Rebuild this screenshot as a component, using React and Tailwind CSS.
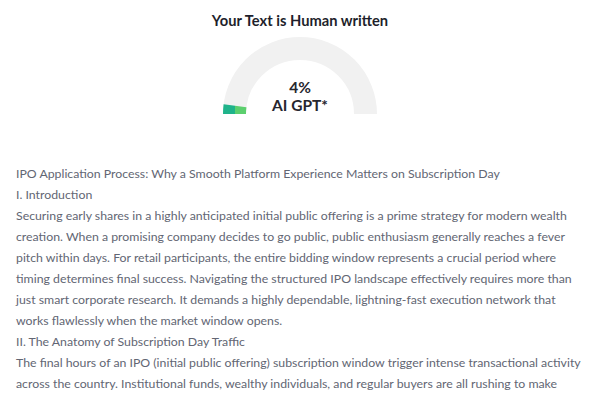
import React from "react";

function Gauge() {
  const cx = 88, cy = 80, R = 77, r = 54;
  const mid = (R + r) / 2;
  const sw = R - r;
  const a = Math.PI * (1 - 0.04);
  const ex = cx + mid * Math.cos(a);
  const ey = cy - mid * Math.sin(a);
  return (
    <div className="relative w-[176px] h-[84px]">
      <svg width="176" height="84" viewBox="0 0 176 84" className="absolute left-0 top-0">
        <defs>
          <linearGradient id="g" x1="0" y1="0" x2="1" y2="0">
            <stop offset="0" stopColor="#1fb38a" />
            <stop offset="1" stopColor="#5ccf6e" />
          </linearGradient>
        </defs>
        <path
          d={`M ${cx - mid} ${cy} A ${mid} ${mid} 0 0 1 ${cx + mid} ${cy}`}
          fill="none"
          stroke="#f1f1f1"
          strokeWidth={sw}
        />
        <path
          d={`M ${cx - mid} ${cy} A ${mid} ${mid} 0 0 1 ${ex} ${ey}`}
          fill="none"
          stroke="url(#g)"
          strokeWidth={sw}
        />
      </svg>
      <div className="absolute left-0 right-0 top-[44px] flex flex-col items-center text-[15.5px] leading-[18px] font-bold text-[#26262e]">
        <span>4%</span>
        <span>AI GPT*</span>
      </div>
    </div>
  );
}

const lines = [
  "IPO Application Process: Why a Smooth Platform Experience Matters on Subscription Day",
  "I. Introduction",
  "Securing early shares in a highly anticipated initial public offering is a prime strategy for modern wealth",
  "creation. When a promising company decides to go public, public enthusiasm generally reaches a fever",
  "pitch within days. For retail participants, the entire bidding window represents a crucial period where",
  "timing determines final success. Navigating the structured IPO landscape effectively requires more than",
  "just smart corporate research. It demands a highly dependable, lightning-fast execution network that",
  "works flawlessly when the market window opens.",
  "II. The Anatomy of Subscription Day Traffic",
  "The final hours of an IPO (initial public offering) subscription window trigger intense transactional activity",
  "across the country. Institutional funds, wealthy individuals, and regular buyers are all rushing to make",
  "their bids during the closing hours. This massive acceleration in demand creates enormous pressure on",
];

export default function App() {
  return (
    <div className="w-[600px] h-[400px] overflow-hidden bg-white" style={{ fontFamily: 'Lato, "Open Sans", sans-serif' }}>
      <div className="flex flex-col items-center">
        <h1 className="mt-[9px] text-[14.7px] leading-[22px] font-bold text-[#1e1f2b]">Your Text is Human written</h1>
        <div className="mt-[3px]">
          <Gauge />
        </div>
      </div>
      <div className="mt-[45px] px-[16px] text-[12.3px] leading-[21px] text-[#626673]">
        {lines.map((l, i) => (
          <div key={i} className="whitespace-nowrap">{l}</div>
        ))}
      </div>
    </div>
  );
}
